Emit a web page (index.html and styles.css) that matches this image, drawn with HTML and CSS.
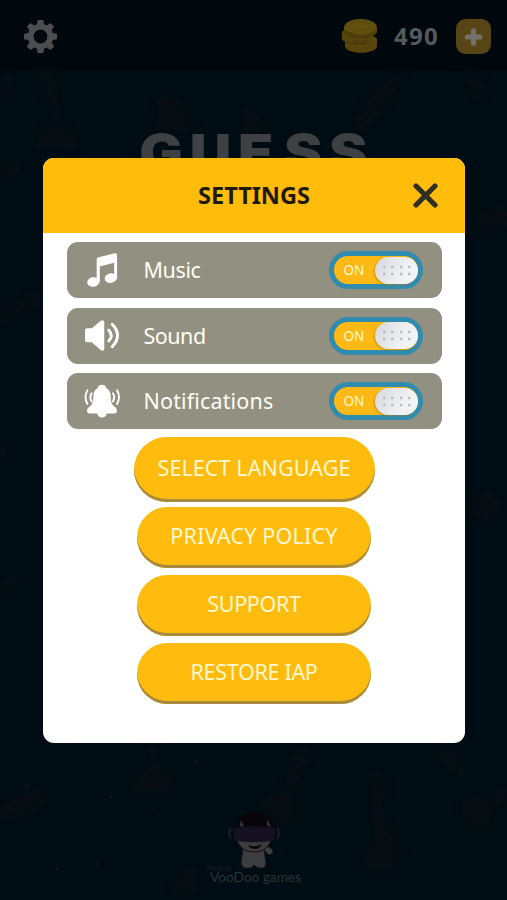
FILE: index.html
```html
<!DOCTYPE html>
<html lang="en">
<head>
<meta charset="utf-8">
<title>Settings</title>
<link rel="stylesheet" href="styles.css">
</head>
<body>
<div class="game">
  <svg class="backdrop" viewBox="0 0 507 900" aria-hidden="true">
    <g class="shapes">
      <path d="M40 72l14 2 6 48 16 18-2 8H38l3-14 13-14zM158 98l14-2 20 25-5 11-28-2zM245 107l10 3 8 20-18 4zM375 90l9-10 17-5-12 24-26 32-10-5zM464 72l14 5 8 17-8 4zM0 85l12-12v20L0 96zM0 173l14-14 8 2-7 14-15 10zM0 310l24-9 15-12 1 14-25 14-15 4zM0 447l5-4-1 20-4 2zM2 588l8-10 7 2-5 12-11 6zM148 746l8 5-2 12 18 14v12l-14 3-24-1 3-15 15-13zM298 751l13-3-10 22-10 20 3 33-12 2-20-18 6-9 17-6 4-22zM370 773l12 3 1 45 16 22-2 26-33 1-1-16 12-14zM462 800l22-4 23-6v8l-20 11 1 18-8 5-15-12zM0 811l13-14 24-6 8 5-12 16-19 4-14 3zM180 872l15-4 1 22-15 8-6-7zM438 752l23 2v18l-12-6zM478 218l18-11 11 3v15l-20 7zM473 500l18-7 12 13-20 18z"/>
    </g>
    <g class="dust">
      <circle cx="188" cy="62" r="1.2"/><circle cx="170" cy="48" r="1"/><circle cx="281" cy="29" r=".8"/><circle cx="27" cy="786" r="1"/><circle cx="111" cy="797" r="1"/><circle cx="197" cy="761" r=".9"/><circle cx="461" cy="773" r="1"/><circle cx="98" cy="864" r="1"/><circle cx="57" cy="869" r="1"/><circle cx="153" cy="809" r=".8"/>
    </g>
  </svg>

  <header class="topbar">
    <svg class="gear" viewBox="0 0 32 32" aria-hidden="true">
      <path fill-rule="evenodd" d="M13.3 0h5.4l.8 4.2 2.6 1.1 3.6-2.4 3.5 3.5-2.4 3.6 1.1 2.6 4.1.8v5.2l-4.1.8-1.1 2.6 2.4 3.6-3.5 3.5-3.6-2.4-2.6 1.1-.8 4.2h-5.4l-.8-4.2-2.6-1.1-3.6 2.4-3.5-3.5L5.200 22l-1.1-2.600L0 18.600v-5.200l4.100-.8L5.200 10 2.800 6.400l3.500-3.500 3.600 2.400 2.600-1.100zM16 9.300a6.700 6.700 0 1 0 0 13.400 6.700 6.700 0 0 0 0-13.400z"/>
    </svg>
    <svg class="coins" viewBox="0 0 36 36" aria-hidden="true">
      <path fill="#57450b" d="M4 21c0-4 32-4 32 0v7c0 9-32 9-32 0z"/>
      <ellipse cx="20" cy="22" rx="15.500" ry="6.500" fill="#5f4e0b"/>
      <path fill="#57460c" d="M.8 14c0-4 31-4 31 0v6c0 8-31 8-31 0z"/>
      <path fill="#524108" d="M3 8h33v6c-4 9-29 9-33 0z"/>
      <ellipse cx="19.500" cy="8.500" rx="16" ry="7.500" fill="#62510d"/>
      <ellipse cx="19.500" cy="8" rx="11" ry="4.500" fill="none" stroke="#57470b"/>
      <path stroke="#3f3308" d="M13 22v4m3-3.500v4m3-4v4m3-4v4m3-4.500v4"/>
      <path fill="none" stroke="#40350a" d="M4 14c5 6 25 7 31 1M3 23c7 5 27 5 31-1"/>
    </svg>
    <span class="balance">490</span>
    <svg class="plus" viewBox="0 0 34 34" aria-hidden="true">
      <rect width="34" height="34" rx="9.500" fill="#584515"/>
      <path d="M17 11.500v12M11 17.500h12" stroke="#74706a" stroke-width="5" stroke-linecap="round"/>
    </svg>
  </header>

  <svg class="title" viewBox="0 0 240 50">
    <text transform="scale(1.15 1)" y="37" x="4.500 48.500 90.500 130.500 169.500">GUESS</text>
  </svg>

  <footer class="credit">
    <svg class="mascot" viewBox="0 0 52 56" aria-hidden="true">
      <path d="M15 36l-2 16 3 4h7l3-3 4 3h6l2-4-2-14 5 5 4-2-1-4-9-5z" fill="#3d3e40" stroke="#17181b"/>
      <path d="M8 23c1 11 8 17 18 17s17-6 18-17z" fill="#3c3c3e" stroke="#170d10"/>
      <path d="M6 18C8 6 15 1 26 1s19 6 20 17l-2 4H8z" fill="#090609"/>
      <path d="M12 14l1-6 3 7zM39 7l4 8-4-2z" fill="#3a3a3d"/>
      <path d="M5 16c7-2 35-2 42 0l-1 12c-9 3-31 3-40 0z" fill="#161121"/>
      <path d="M3 16c-3 4-2 8 0 11M49 16c3 4 2 8 0 11" fill="none" stroke="#1c2129" stroke-width="2"/>
      <path d="M20 33q7 3 14-1-2 5-7 5-5 0-7-4z" fill="#12070a"/>
    </svg>
    <svg class="brand" viewBox="0 0 100 28">
      <text class="by" x="1" y="6" textLength="25" lengthAdjust="spacingAndGlyphs">Made by</text>
      <text class="studio" x="4" y="17" textLength="91" lengthAdjust="spacingAndGlyphs">VooDoo games</text>
    </svg>
  </footer>
</div>

<main class="dialog">
  <div class="dialog-head">
    <h1>SETTINGS</h1>
    <svg class="close" viewBox="0 0 24 24" aria-label="Close"><path d="M2.900 2.900l18.200 18.200M21.100 2.900L2.900 21.100"/></svg>
  </div>
  <div class="dialog-body">
    <div class="options">
      <div class="row">
        <svg class="icon" viewBox="0 0 36 36" aria-hidden="true">
          <path d="M12 6.500Q12 5 14 4.300L30.500.3Q33 0 33 2v25h-3V10L15.200 14v16H12z"/>
          <ellipse cx="8.500" cy="29.800" rx="6.300" ry="4.900" transform="rotate(-10 8.500 29.800)"/>
          <ellipse cx="26.500" cy="25.800" rx="6.300" ry="4.900" transform="rotate(-10 26.500 25.800)"/>
        </svg>
        <span class="label music">Music</span>
        <span class="toggle"><span class="state">ON</span><span class="knob"></span></span>
      </div>
      <div class="row">
        <svg class="icon" viewBox="0 0 36 36" aria-hidden="true">
          <path d="M2 10.500h5L16 3Q19.800 1 19.800 4.500v27Q19.800 35 16 33L7 25H2Q0 25 0 23v-10.500Q0 10.500 2 10.500z"/>
          <path class="line" d="M24.500 12.500q5 5.500 0 11M28 6.500q11 11.500 0 23"/>
        </svg>
        <span class="label sound">Sound</span>
        <span class="toggle"><span class="state">ON</span><span class="knob"></span></span>
      </div>
      <div class="row">
        <svg class="icon" viewBox="0 0 36 36" aria-hidden="true">
          <path d="M17.500.8q3.500 0 4.500 3.400 4.500 2.300 4.500 9.300 0 6.500 3 9 3 1.500 3.500 4.500 0 3.300-3 3.300h-7.500q-1 4.200-5 4.200t-5-4.200H5q-3 0-3-3.300.5-3 3.500-4.500 3-2.500 3-9 0-7 4.500-9.300Q14 .8 17.500.8z"/>
          <path class="thin" d="M6.800 9.500q-2.600 4 0 8.500M2.500 6.500q-4 7 0 14M28.700 9.500q2.600 4 0 8.500M33 6.500q4 7 0 14"/>
        </svg>
        <span class="label notifications">Notifications</span>
        <span class="toggle"><span class="state">ON</span><span class="knob"></span></span>
      </div>
    </div>
    <div class="actions">
      <button class="action wide">SELECT LANGUAGE</button>
      <button class="action policy">PRIVACY POLICY</button>
      <button class="action support">SUPPORT</button>
      <button class="action restore">RESTORE IAP</button>
    </div>
  </div>
</main>
</body>
</html>
```
FILE: styles.css
```css
* { box-sizing: border-box; }

body {
  margin: 0;
  width: 507px;
  height: 900px;
  overflow: hidden;
  position: relative;
  background: #000c13;
  font-family: "Noto Sans", sans-serif;
}

.game {
  position: relative;
  height: 900px;
  display: flex;
  flex-direction: column;
  align-items: center;
}

.backdrop { position: absolute; inset: 0; }
.shapes { fill: #060e14; filter: blur(2px); }
.dust { fill: #182429; }

.topbar {
  position: relative;
  width: 100%;
  height: 70px;
  padding: 2px 16px 0 24px;
  display: flex;
  align-items: center;
  background: #00080dcc;
}
.gear { width: 33px; height: 33px; fill: #4b4d4f; }
.coins { width: 36px; height: 36px; margin-left: auto; }
.balance {
  width: 45px;
  margin: -2px 17px 0 17px;
  color: #555a5d;
  font-size: 24px;
  font-weight: 700;
  letter-spacing: 1.300px;
}
.plus { width: 35px; height: 35px; }

.title { position: relative; width: 240px; height: 50px; margin-top: 63px; }
.title text { font: 900 50px Inter, sans-serif; fill: #3d4143; }

.credit {
  position: relative;
  margin-top: auto;
  height: 90px;
  display: flex;
  flex-direction: column;
  align-items: center;
}
.mascot { width: 52px; height: 56px; margin-top: 2px; }
.brand { width: 100px; height: 28px; margin-top: -3px; margin-left: 4px; }
.brand text { fill: #2a3338; font-family: Lato, sans-serif; }
.brand .by { font-size: 7px; fill: #17232a; }
.brand .studio { font-size: 14px; }

.dialog {
  position: absolute;
  left: 43px;
  top: 158px;
  width: 422px;
  height: 585px;
  border-radius: 11px;
  overflow: hidden;
  background: #fff;
}
.dialog-head {
  height: 75px;
  display: grid;
  grid-template-columns: 1fr auto 1fr;
  align-items: center;
  background: #ffbc0b;
}
h1 {
  grid-column: 2;
  margin: 0 0 2px;
  color: #201a0b;
  font-size: 23.500px;
  line-height: 32px;
  font-weight: 700;
}
.close { width: 25px; height: 25px; justify-self: end; margin-right: 27px; }
.close path { fill: none; stroke: #30301f; stroke-width: 5; stroke-linecap: round; }

.dialog-body { padding: 9px 23.500px 0; }
.options { display: flex; flex-direction: column; gap: 9.500px; }
.row {
  height: 56px;
  padding: 0 19px 0 18px;
  display: flex;
  align-items: center;
  border-radius: 11px;
  background: #929080;
  color: #fffef4;
}
.icon { width: 35px; height: 35px; fill: #fff; overflow: visible; }
.icon .line { fill: none; stroke: #fff; stroke-width: 3; stroke-linecap: round; }
.icon .thin { fill: none; stroke: #fff; stroke-width: 2; stroke-linecap: round; }
.label { margin-left: 24px; font-size: 21.500px; line-height: 30px; }
.music { letter-spacing: -.4px; }
.sound { letter-spacing: -.5px; }
.notifications { letter-spacing: .15px; }
.toggle {
  width: 94px;
  height: 38px;
  margin-left: auto;
  display: flex;
  align-items: center;
  justify-content: space-between;
  border: 5.500px solid #308caf;
  border-radius: 19px;
  background: #ffb914;
}
.state { margin-left: 10px; font-size: 13.500px; line-height: 20px; color: #fff8d8; }
.knob {
  width: 43px;
  height: 27px;
  border-radius: 14px;
  background:
    radial-gradient(circle, #b5b9c0 .8px, transparent 1.800px) 5px 6px / 8.500px 8px no-repeat,
    radial-gradient(circle, #b5b9c0 .8px, transparent 1.800px) 13.500px 6px / 8.500px 8px no-repeat,
    radial-gradient(circle, #b5b9c0 .8px, transparent 1.800px) 22px 6px / 8.500px 8px no-repeat,
    radial-gradient(circle, #b5b9c0 .8px, transparent 1.800px) 30.500px 6px / 8.500px 8px no-repeat,
    radial-gradient(circle, #b5b9c0 .8px, transparent 1.800px) 5px 13px / 8.500px 8px no-repeat,
    radial-gradient(circle, #b5b9c0 .8px, transparent 1.800px) 13.500px 13px / 8.500px 8px no-repeat,
    radial-gradient(circle, #b5b9c0 .8px, transparent 1.800px) 22px 13px / 8.500px 8px no-repeat,
    radial-gradient(circle, #b5b9c0 .8px, transparent 1.800px) 30.500px 13px / 8.500px 8px no-repeat,
    linear-gradient(120deg, #d6d8dc, #f2f3f5 70%);
  box-shadow: -1px 1px 2px #a8791a99;
}

.actions {
  display: flex;
  flex-direction: column;
  align-items: center;
  gap: 7px;
  padding-top: 8px;
}
.action {
  width: 234px;
  height: 61px;
  padding: 0 0 5px;
  border: 0;
  border-radius: 31px;
  background: #ffbb0e;
  box-shadow: inset 0 -3px #a88a3c;
  color: #fff8cf;
  font: 400 21.500px "Noto Sans", sans-serif;
}
.action.wide { width: 241px; height: 65px; margin-bottom: -2px; border-radius: 33px; letter-spacing: .1px; }
.action.policy { letter-spacing: .2px; }
.action.support { letter-spacing: -.3px; }
.action.restore { letter-spacing: -.3px; }
```
